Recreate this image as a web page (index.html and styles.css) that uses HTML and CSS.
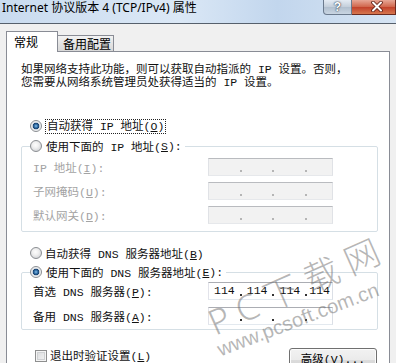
FILE: index.html
```html
<!DOCTYPE html>
<html lang="zh-CN">
<head>
	<meta charset="UTF-8">
	<title>Internet 协议版本 4 (TCP/IPv4) 属性</title>
	<link rel="stylesheet" href="styles.css">
</head>
<body>
	<div class="titlebar">
		<div class="title">Internet 协议版本 4 (TCP/IPv4) 属性</div>
		<div class="capbtns">
			<div class="helpbtn">?</div>
			<div class="closebtn">
				<svg width="12" height="11" viewBox="0 0 12 11"><path d="M2 1.5 L10 9.5 M10 1.5 L2 9.5" stroke="#5a1a10" stroke-width="3.6" stroke-linecap="round"/><path d="M2 1.5 L10 9.5 M10 1.5 L2 9.5" stroke="#fff" stroke-width="2" stroke-linecap="round"/></svg>
			</div>
		</div>
	</div>
	<div class="tabs">
		<div class="tab active">常规</div>
		<div class="tab">备用配置</div>
	</div>
	<div class="panel">
		<p class="intro">如果网络支持此功能，则可以获取自动指派的 IP 设置。否则，<br>您需要从网络系统管理员处获得适当的 IP 设置。</p>

		<div class="opt first"><span class="radio on"></span><span class="focus">自动获得 IP 地址(<u>O</u>)</span></div>
		<fieldset class="group ipgroup">
			<legend><span class="radio"></span>使用下面的 IP 地址(<u>S</u>):</legend>
			<div class="row off"><span class="lbl">IP 地址(<u>I</u>):</span><span class="ipbox"><span class="seg"></span><span class="dot"></span><span class="seg"></span><span class="dot"></span><span class="seg"></span><span class="dot"></span><span class="seg"></span></span></div>
			<div class="row off"><span class="lbl">子网掩码(<u>U</u>):</span><span class="ipbox"><span class="seg"></span><span class="dot"></span><span class="seg"></span><span class="dot"></span><span class="seg"></span><span class="dot"></span><span class="seg"></span></span></div>
			<div class="row off"><span class="lbl">默认网关(<u>D</u>):</span><span class="ipbox"><span class="seg"></span><span class="dot"></span><span class="seg"></span><span class="dot"></span><span class="seg"></span><span class="dot"></span><span class="seg"></span></span></div>
		</fieldset>

		<div class="opt dns"><span class="radio"></span><span>自动获得 DNS 服务器地址(<u>B</u>)</span></div>
		<fieldset class="group dnsgroup">
			<legend><span class="radio on"></span>使用下面的 DNS 服务器地址(<u>E</u>):</legend>
			<div class="row"><span class="lbl">首选 DNS 服务器(<u>P</u>):</span><span class="ipbox"><span class="seg">114</span><span class="dot"></span><span class="seg">114</span><span class="dot"></span><span class="seg">114</span><span class="dot"></span><span class="seg">114</span></span></div>
			<div class="row"><span class="lbl">备用 DNS 服务器(<u>A</u>):</span><span class="ipbox"><span class="seg"></span><span class="dot"></span><span class="seg"></span><span class="dot"></span><span class="seg"></span><span class="dot"></span><span class="seg"></span></span></div>
		</fieldset>

		<div class="bottom">
			<span class="check"></span>
			<span class="checklbl">退出时验证设置(<u>L</u>)</span>
			<div class="btn">高级(<u>V</u>)...</div>
		</div>
	</div>

	<div class="mark big"><span>P</span><span>C</span><span>下</span><span>载</span><span>网</span></div>
	<div class="mark url">www.pcsoft.com.cn</div>
</body>
</html>
```

FILE: styles.css
```css
*{
	margin: 0;
	padding: 0;
	box-sizing: border-box;
}
body{
	position: relative;
	width: 396px;
	height: 363px;
	overflow: hidden;
	background-color: #f0f0f0;
	font-family: "Liberation Mono", "Noto Sans CJK SC", monospace;
	font-size: 11.5px;
	color: #111;
}
u{
	text-decoration: underline;
	text-underline-offset: 1px;
}

/* title bar */
.titlebar{
	height: 24px;
	display: flex;
	align-items: flex-start;
	background: linear-gradient(to right, #c9dbef 0%, #dbe8f6 45%, #c2d6ed 70%, #d6e4f3 100%);
	border-bottom: 1px solid #56606c;
}
.title{
	padding-left: 2px;
	font-family: "Noto Sans", "Noto Sans CJK SC", sans-serif;
	font-size: 12px;
	line-height: 16px;
	color: #000;
}
.capbtns{
	margin-left: auto;
	display: flex;
}
.helpbtn{
	width: 29px;
	height: 15px;
	border: 1px solid #6b7a8d;
	border-top: none;
	border-bottom-left-radius: 4px;
	background: linear-gradient(#e4ebf3, #c3ceda 50%, #b1bfce 51%, #c9d5e2);
	color: #fff;
	font-family: "Liberation Sans", sans-serif;
	font-weight: bold;
	font-size: 12px;
	line-height: 14px;
	text-align: center;
	text-shadow: 0 0 2px #2c3a4c, 0 0 1px #2c3a4c;
}
.closebtn{
	width: 44px;
	height: 15px;
	border: 1px solid #6b2b20;
	border-top: none;
	border-left: none;
	background: linear-gradient(#e7a796, #d0654a 50%, #c2412a 51%, #d6774f);
	padding-left: 19px;
	padding-top: 1px;
}
.closebtn svg{
	display: block;
}

/* tabs */
.tabs{
	display: flex;
	align-items: flex-end;
	margin-top: 7px;
	padding-left: 6px;
	margin-bottom: -1px;
	height: 21px;
}
.tab{
	font-family: "Noto Sans CJK SC", sans-serif;
	font-size: 12px;
	color: #000;
	border: 1px solid #898c95;
	border-bottom: none;
}
.tab.active{
	position: relative;
	z-index: 1;
	width: 52px;
	height: 21px;
	background-color: #fff;
	padding-left: 7px;
	line-height: 19px;
}
.tab:not(.active){
	width: 57px;
	height: 16px;
	margin-left: -1px;
	margin-bottom: 1px;
	padding-left: 5px;
	line-height: 15px;
	background: linear-gradient(#f3f3f3, #e4e4e4 50%, #d8d8d8);
}

/* tab page */
.panel{
	margin: 0 6px;
	height: 330px;
	background-color: #fff;
	border: 1px solid #898c95;
	padding-top: 11px;
}
.intro{
	margin-left: 14px;
	line-height: 13px;
	white-space: nowrap;
}
.opt{
	display: flex;
	align-items: center;
	height: 18px;
	padding-left: 23px;
	white-space: nowrap;
}
.opt.first{
	margin-top: 28px;
}
.opt.dns{
	margin-top: 12px;
}
.focus{
	border: 1px dotted #222;
	padding: 0 1px;
	line-height: 13px;
}
.radio{
	flex: none;
	width: 12px;
	height: 12px;
	margin-right: 3px;
	border-radius: 50%;
	border: 1px solid #8b8e92;
	background: radial-gradient(circle at 45% 40%, #fdfdfd 0, #f0f0f0 3px, #d6d8db 6px);
}
.radio.on{
	background: radial-gradient(circle at 50% 50%, #8fc0e6 0, #3a78b0 1.5px, #163f6c 3px, #d9dee4 3.6px, #f6f6f6 5px);
}

/* group boxes */
.group{
	margin: 2px 11px 0 14px;
	padding: 3px 0 7px 11px;
	border: 1px solid #d5dfe5;
	border-radius: 2px;
	min-width: 0;
}
.group legend{
	display: flex;
	align-items: center;
	height: 18px;
	margin-left: -3px;
	padding: 0 3px 0 0;
	white-space: nowrap;
}
.group legend .radio{
	margin-right: 4px;
}
.dnsgroup{
	margin-top: 1px;
	padding-top: 1px;
	padding-bottom: 4px;
}
.row{
	display: flex;
	align-items: center;
	height: 18px;
	white-space: nowrap;
}
.row + .row{
	margin-top: 6px;
}
.dnsgroup .row + .row{
	margin-top: 7px;
}
.lbl{
	width: 175px;
}
.row.off .lbl{
	color: #a3a3a3;
}
.ipbox{
	display: flex;
	align-items: center;
	width: 125px;
	height: 18px;
	border: 1px solid;
	border-color: #abadb3 #dbdfe6 #e3e9ef #e2e3ea;
	background-color: #fff;
}
.row.off .ipbox{
	background-color: #f2f2f2;
	border-color: #b9bbbf #e0e2e6 #e6e8eb #e0e2e6;
}
.seg{
	width: 31px;
	text-align: center;
	line-height: 16px;
}
.seg:last-child{
	width: 25px;
}
.dot{
	width: 2px;
	height: 2px;
	margin-top: 7px;
	background-color: #333;
}
.row.off .dot{
	background-color: #b5b5b5;
}

/* bottom row */
.bottom{
	display: flex;
	align-items: flex-start;
	margin-top: 18px;
	padding-left: 28px;
	padding-right: 12px;
}
.check{
	width: 12px;
	height: 12px;
	margin-top: 2px;
	border: 1px solid #8e8f8f;
	box-shadow: inset 0 0 0 1px #f4f4f4, inset 0 0 0 2px #cfd1d3;
	background: linear-gradient(135deg, #d8d9db, #f5f5f5);
}
.checklbl{
	margin-left: 3px;
	line-height: 18px;
}
.btn{
	margin-left: auto;
	width: 88px;
	height: 23px;
	border: 1px solid #707070;
	border-radius: 3px;
	background: linear-gradient(#f2f2f2, #ebebeb 50%, #dddddd 51%, #cfcfcf);
	box-shadow: inset 0 0 0 1px #fcfcfc;
	text-align: center;
	line-height: 20px;
	padding-top: 1px;
	color: #000;
}

/* watermark */
.mark{
	position: absolute;
	white-space: nowrap;
	color: rgba(110, 110, 110, 0.5);
	font-family: "Noto Sans", "Noto Sans CJK SC", sans-serif;
	transform-origin: left center;
	pointer-events: none;
}
.mark.big{
	display: flex;
	align-items: center;
	gap: 9px;
	left: 210px;
	top: 302px;
	height: 44px;
	font-size: 35px;
	line-height: 44px;
	font-weight: 300;
	transform: rotate(-24deg);
}
.mark.url{
	left: 218px;
	top: 338px;
	font-family: "Liberation Sans", sans-serif;
	font-size: 20px;
	line-height: 24px;
	transform: rotate(-21deg);
}
```
